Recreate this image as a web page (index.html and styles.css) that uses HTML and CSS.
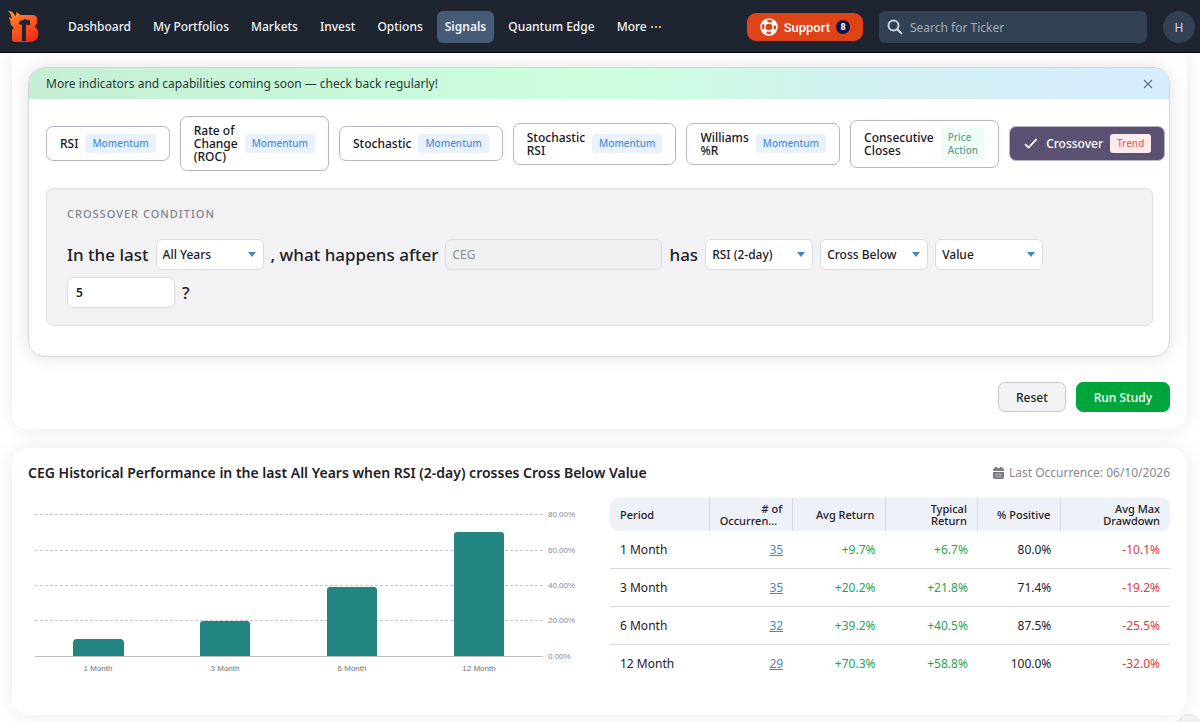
FILE: index.html
```html
<!DOCTYPE html>
<html lang="en">
<head>
<meta charset="utf-8">
<meta name="viewport" content="width=device-width, initial-scale=1">
<title>Signals</title>
<link rel="stylesheet" href="styles.css">
</head>
<body>
<header class="topbar">
  <a class="logo" href="#" aria-label="Home">
    <svg width="32" height="34" viewBox="0 0 32 34" aria-hidden="true">
      <defs><linearGradient id="flame" x1="0" y1="0" x2="0.6" y2="1"><stop offset="0" stop-color="#ff9a2e"/><stop offset="0.45" stop-color="#fb6424"/><stop offset="1" stop-color="#f5301c"/></linearGradient></defs>
      <path fill="url(#flame)" d="M0 1C4 1 6 3 7 6C9 5 8 3 8 2C11 3 12 5 13 5H25C29 5 30 9 29 13C28 16 27 16 27 17C30 19 31 23 30 26C29 30 26 32 20 32H8C5 32 4 31 4 28V20L6 18L3 15C2 13 3 12 2 10C1 9 1 8 1 7L4 9C3 6 3 3 0 1Z"/>
      <path fill="#1e2530" d="M11 12L14 10H16V9H18V10H22V15H19V14L18 15V31H14V15L11 14Z"/>
    </svg>
  </a>
  <nav class="nav">
    <a href="#">Dashboard</a>
    <a href="#">My Portfolios</a>
    <a href="#">Markets</a>
    <a href="#">Invest</a>
    <a href="#">Options</a>
    <a href="#" class="active">Signals</a>
    <a href="#">Quantum Edge</a>
    <a href="#">More ⋯</a>
  </nav>
  <div class="tools">
    <button class="support" type="button">
      <svg width="18" height="18" viewBox="0 0 18 18" aria-hidden="true"><circle cx="9" cy="9" r="8" fill="none" stroke="#fff" stroke-width="1.6"/><circle cx="9" cy="9" r="6" fill="none" stroke="#fff" stroke-width="4" stroke-dasharray="4.8 4.62" stroke-dashoffset="-2.3"/><circle cx="9" cy="9" r="4" fill="none" stroke="#fff" stroke-width="1.4"/></svg>
      Support <span class="count">8</span>
    </button>
    <label class="search">
      <svg width="16" height="16" viewBox="0 0 16 16" aria-hidden="true"><circle cx="6.5" cy="6.5" r="5" fill="none" stroke="currentColor" stroke-width="2"/><path d="M10.2 10.2L14.3 14.3" stroke="currentColor" stroke-width="2.2" stroke-linecap="round"/></svg>
      <input type="search" placeholder="Search for Ticker" aria-label="Search for Ticker">
    </label>
    <button class="avatar" type="button">H</button>
  </div>
</header>
<main>
  <section class="panel study">
    <div class="card">
      <div class="banner">
        <span>More indicators and capabilities coming soon — check back regularly!</span>
        <button type="button" class="close" aria-label="Dismiss"><svg width="10" height="10" viewBox="0 0 10 10" aria-hidden="true"><path d="M1 1L9 9M9 1L1 9" stroke="#667481" stroke-width="1.2"/></svg></button>
      </div>
      <div class="chips">
        <button type="button" class="chip">RSI <span class="tag">Momentum</span></button>
        <button type="button" class="chip"><span>Rate of<br>Change<br>(ROC)</span> <span class="tag">Momentum</span></button>
        <button type="button" class="chip">Stochastic <span class="tag">Momentum</span></button>
        <button type="button" class="chip"><span>Stochastic<br>RSI</span> <span class="tag">Momentum</span></button>
        <button type="button" class="chip"><span>Williams<br>%R</span> <span class="tag">Momentum</span></button>
        <button type="button" class="chip"><span>Consecutive<br>Closes</span> <span class="tag price">Price<br>Action</span></button>
        <button type="button" class="chip selected" aria-pressed="true"><svg width="16" height="13" viewBox="0 0 16 13" aria-hidden="true"><path d="M2 7.2L5.6 10.6L13.6 2.2" fill="none" stroke="#fff" stroke-width="1.8"/></svg>Crossover <span class="tag trend">Trend</span></button>
      </div>
      <form class="condition">
        <h2>CROSSOVER CONDITION</h2>
        <div class="sentence">
          <span>In the last</span>
          <span class="pick"><select aria-label="Time range"><option>All Years</option></select></span>
          <span>, what happens after</span>
          <input class="ticker" type="text" placeholder="CEG" aria-label="Ticker" disabled>
          <span>has</span>
          <span class="pick"><select aria-label="Indicator"><option>RSI (2-day)</option></select></span>
          <span class="pick"><select aria-label="Direction"><option>Cross Below</option></select></span>
          <span class="pick"><select aria-label="Target"><option>Value</option></select></span>
          <input class="amount" type="text" value="5" aria-label="Value">
          <span>?</span>
        </div>
      </form>
    </div>
    <div class="actions">
      <button type="button" class="btn">Reset</button>
      <button type="button" class="btn run">Run Study</button>
    </div>
  </section>
  <section class="panel results">
    <div class="heading">
      <h1>CEG Historical Performance in the last All Years when RSI (2-day) crosses Cross Below Value</h1>
      <p><svg width="11" height="12" viewBox="0 0 11 12" aria-hidden="true"><path fill="#777b82" d="M2 0H4V1H7V0H9V1Q11 1 11 3V4H0V3Q0 1 2 1ZM0 5H11V10Q11 12 9 12H2Q0 12 0 10Z"/><path d="M2 7.5H9M2 9.5H9M4 6V11M7 6V11" stroke="#bfc1c5" stroke-width="0.6"/></svg>Last Occurrence: 06/10/2026</p>
    </div>
    <div class="columns">
      <svg class="chart" viewBox="0 0 560 185" role="img" aria-label="Average return by period">
        <g class="grid"><path d="M7 16.5H515"/><path d="M7 52.5H515"/><path d="M7 87.5H515"/><path d="M7 122.5H515"/></g>
        <g class="bars">
          <path d="M45 158V145Q45 141 49 141H92Q96 141 96 145V158Z"/>
          <path d="M172 158V126Q172 123 175 123H219Q222 123 222 126V158Z"/>
          <path d="M299 158V92Q299 89 302 89H346Q349 89 349 92V158Z"/>
          <path d="M426 158V37Q426 34 429 34H473Q476 34 476 37V158Z"/>
        </g>
        <path class="axis" d="M7 158.5H515"/>
        <g class="ylabels"><text x="520" y="19">80.00%</text><text x="520" y="55">60.00%</text><text x="520" y="90">40.00%</text><text x="520" y="125">20.00%</text><text x="520" y="161">0.00%</text></g>
        <g class="xlabels"><text x="70" y="173">1 Month</text><text x="197" y="173">3 Month</text><text x="324" y="173">6 Month</text><text x="451" y="173">12 Month</text></g>
      </svg>
      <table>
        <colgroup><col class="c1"><col class="c2"><col class="c3"><col class="c4"><col class="c5"><col></colgroup>
        <thead><tr><th>Period</th><th># of<br><span class="cut">Occurrences</span></th><th>Avg Return</th><th>Typical<br>Return</th><th>% Positive</th><th>Avg Max<br>Drawdown</th></tr></thead>
        <tbody>
          <tr><td>1 Month</td><td><a href="#">35</a></td><td class="up">+9.7%</td><td class="up">+6.7%</td><td>80.0%</td><td class="down">-10.1%</td></tr>
          <tr><td>3 Month</td><td><a href="#">35</a></td><td class="up">+20.2%</td><td class="up">+21.8%</td><td>71.4%</td><td class="down">-19.2%</td></tr>
          <tr><td>6 Month</td><td><a href="#">32</a></td><td class="up">+39.2%</td><td class="up">+40.5%</td><td>87.5%</td><td class="down">-25.5%</td></tr>
          <tr><td>12 Month</td><td><a href="#">29</a></td><td class="up">+70.3%</td><td class="up">+58.8%</td><td>100.0%</td><td class="down">-32.0%</td></tr>
        </tbody>
      </table>
    </div>
  </section>
</main>
<button type="button" class="fab" aria-label="Open widget"></button>
</body>
</html>
```
FILE: styles.css
```css
* { box-sizing: border-box; }
body { margin: 0; background: #fff; color: #1d2025; font-family: "Noto Sans", "Open Sans", sans-serif; font-size: 12px; overflow-x: hidden; }
button, input, select { font-family: inherit; }
h1, h2, p { margin: 0; }

.topbar { position: relative; z-index: 1; display: flex; align-items: center; height: 53px; padding: 2px 5px 0 8px; background: #1e2530; border-bottom: 1px solid #06080c; }
.logo { display: flex; width: 32px; margin-right: 20px; }
.nav { display: flex; gap: 6px; }
.nav a { padding: 0 8px; line-height: 32px; border-radius: 6px; color: #f2f4f7; font-size: 12px; font-weight: 500; text-decoration: none; white-space: nowrap; }
.nav .active { background: #465b76; font-weight: 600; }
.tools { display: flex; align-items: center; gap: 16px; margin-left: auto; }
.support { display: flex; align-items: center; gap: 6px; height: 28px; padding: 0 13px; border: 0; border-radius: 9px; background: #df4318; color: #fff; font-family: Roboto, sans-serif; font-size: 13px; font-weight: 500; }
.count { width: 14px; border-radius: 7px; background: #0b1744; font-size: 9px; font-weight: 700; line-height: 14px; text-align: center; }
.search { display: flex; align-items: center; gap: 7px; width: 268px; height: 32px; padding: 0 8px; border-radius: 6px; background: #334155; color: #cbd3dd; }
.search input { flex: 1; min-width: 0; padding: 0; border: 0; outline: 0; background: none; color: #fff; font-size: 12px; }
.search input::placeholder { color: #a4adba; }
.avatar { width: 32px; height: 32px; padding: 0; border: 0; border-radius: 50%; background: #334155; color: #d6dce4; font-size: 12px; }

.panel { margin: 0 13px 19px 12px; padding: 0 17px 0 16px; border-radius: 16px; background: #fff; box-shadow: 0 0 20px rgba(0, 0, 0, 0.09); }
.study { padding-top: 14px; padding-bottom: 17px; border-radius: 0 0 16px 16px; }
.card { overflow: hidden; border: 1px solid #d3d5db; border-radius: 16px; padding-bottom: 30px; box-shadow: 0 0 20px rgba(0, 0, 0, 0.12); }
.banner { display: flex; align-items: center; justify-content: space-between; height: 31px; padding: 0 16px 0 17px; background: linear-gradient(90deg, #c5eed5, #cbffde 50%, #d2f0f2 75%, #d7edff); color: #263b36; }
.close { display: flex; padding: 0; border: 0; background: none; }
.chips { display: flex; align-items: center; gap: 10px; padding: 17px 0 17px 17px; }
.chip { display: flex; flex: none; align-items: center; gap: 7px; padding: 7px 13px; border: 1px solid #b5b5c3; border-radius: 7px; background: #fff; color: #15171b; font-size: 12px; font-weight: 500; line-height: 13px; text-align: left; }
.tag { padding: 3px 7px; border-radius: 3px; background: #e9f2fc; color: #4a8fd3; font-size: 10px; }
.price { background: #effcf8; color: #6b9f90; }
.trend { background: #ffebed; color: #e4686b; }
.selected { background: #5b5273; color: #fff; }
.condition { margin: 0 16px 0 17px; padding: 16px 20px 17px; border: 1px solid #e0e0e5; border-radius: 7px; background: #f2f2f4; }
.condition h2 { color: #7f8289; font-size: 11px; font-weight: 500; line-height: 18px; letter-spacing: 1px; }
.sentence { display: flex; flex-wrap: wrap; align-items: center; gap: 7px; padding-top: 16px; font-size: 17px; font-weight: 500; line-height: 31px; }
.pick { position: relative; width: 108px; line-height: 0; }
.pick::after { content: ""; position: absolute; right: 8px; top: 13px; border: 4px solid transparent; border-top: 5px solid #4088c8; border-bottom: 0; pointer-events: none; }
.pick select, .sentence input { height: 31px; padding: 0 6px; border: 1px solid #dadbe1; border-radius: 6px; color: #1d2025; font-size: 12px; font-weight: 500; }
.pick select { width: 100%; appearance: none; background: #fff; }
.sentence .ticker { width: 217px; background: #f0f0f2; }
.ticker::placeholder { color: #8a8c91; font-weight: 400; }
.sentence .amount { width: 108px; padding: 0 8px; background: #fff; font-weight: 600; }
.actions { display: flex; justify-content: flex-end; gap: 10px; padding-top: 25px; }
.btn { height: 30px; padding: 0 17px; border: 1px solid #c6c7cd; border-radius: 7px; background: #f3f3f6; color: #202227; font-size: 12px; font-weight: 500; }
.run { border-color: #00a53c; background: #00a53c; color: #fff; }

.results { margin-bottom: 7px; padding-top: 13px; padding-bottom: 32px; }
.heading { display: flex; align-items: center; justify-content: space-between; padding-bottom: 13px; line-height: 24px; }
.heading h1 { font-size: 14px; font-weight: 600; }
.heading p { display: flex; align-items: center; gap: 5px; color: #858990; font-size: 12px; }
.columns { display: grid; grid-template-columns: 1fr 1fr; gap: 22px; align-items: start; }
.chart { width: 100%; font-family: "Liberation Sans", Arial, sans-serif; font-size: 8px; }
.grid { stroke: #c5c5c5; stroke-dasharray: 3 2; }
.bars { fill: #238581; }
.axis { stroke: #bdbdbd; }
.ylabels { fill: #85888d; }
.xlabels { fill: #6f737a; text-anchor: middle; }
table { width: 100%; table-layout: fixed; border-spacing: 0; }
.c1 { width: 17.8%; } .c2 { width: 14.9%; } .c3 { width: 16.5%; } .c4 { width: 16.5%; } .c5 { width: 14.9%; }
th, td { padding: 0 10px; text-align: right; }
th { height: 33px; border-right: 1px solid #d5dae1; background: #eef1f7; font-size: 11px; font-weight: 500; line-height: 12px; }
th:last-child { border-right: 0; border-radius: 0 8px 8px 0; }
th:first-child { border-radius: 8px 0 0 8px; }
th:first-child, td:first-child { text-align: left; }
.cut { display: block; overflow: hidden; text-overflow: ellipsis; }
td { height: 38px; border-bottom: 1px solid #d8dadd; font-size: 12px; }
tr:last-child td { height: 37px; border-bottom: 0; }
td a { color: #4387ce; }
.up { color: #25a553; }
.down { color: #dc3d43; }
.fab { position: fixed; right: -1px; bottom: -16px; width: 24px; height: 24px; padding: 0; border: 1px solid #dddee2; border-radius: 50%; background: #f1f1f3; }
```
